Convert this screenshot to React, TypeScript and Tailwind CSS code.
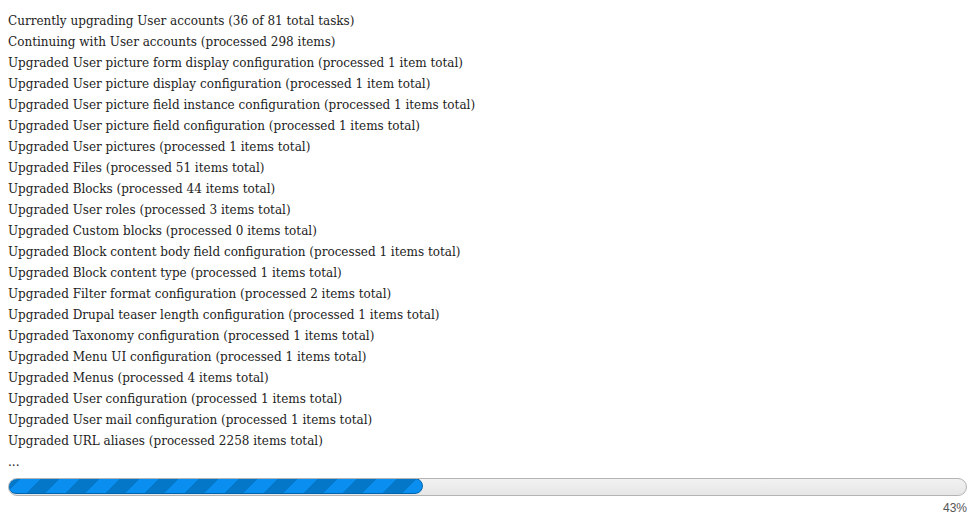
const lines = [
  'Currently upgrading User accounts (36 of 81 total tasks)',
  'Continuing with User accounts (processed 298 items)',
  'Upgraded User picture form display configuration (processed 1 item total)',
  'Upgraded User picture display configuration (processed 1 item total)',
  'Upgraded User picture field instance configuration (processed 1 items total)',
  'Upgraded User picture field configuration (processed 1 items total)',
  'Upgraded User pictures (processed 1 items total)',
  'Upgraded Files (processed 51 items total)',
  'Upgraded Blocks (processed 44 items total)',
  'Upgraded User roles (processed 3 items total)',
  'Upgraded Custom blocks (processed 0 items total)',
  'Upgraded Block content body field configuration (processed 1 items total)',
  'Upgraded Block content type (processed 1 items total)',
  'Upgraded Filter format configuration (processed 2 items total)',
  'Upgraded Drupal teaser length configuration (processed 1 items total)',
  'Upgraded Taxonomy configuration (processed 1 items total)',
  'Upgraded Menu UI configuration (processed 1 items total)',
  'Upgraded Menus (processed 4 items total)',
  'Upgraded User configuration (processed 1 items total)',
  'Upgraded User mail configuration (processed 1 items total)',
  'Upgraded URL aliases (processed 2258 items total)',
  '...',
];

export default function App() {
  const percent = 43;

  return (
    <div className="min-h-screen bg-white px-2 pt-[11px] text-[#222] font-['DejaVu_Serif',Georgia,serif] text-[12px] leading-[21px]">
      {/* upgrade log */}
      <div>
        {lines.map((line, i) => (
          <div key={i}>{line}</div>
        ))}
      </div>

      {/* progress bar */}
      <div className="mt-[5px] h-[18px] rounded-full border border-[#b4b4b4] bg-gradient-to-b from-[#f2f2f2] to-[#e6e6e6] overflow-hidden">
        <div
          className="h-full rounded-full border border-[#0065ad] -m-px bg-[repeating-linear-gradient(-45deg,#0a8ef0_0px,#0a8ef0_14px,#0577c9_14px,#0577c9_28px)]"
          style={{ width: `calc(${percent}% + 3px)` }}
        />
      </div>
      <div className="mt-[5px] text-right font-['Liberation_Sans',Arial,sans-serif] text-[12px] leading-[14px] text-[#555]">
        {percent}%
      </div>
    </div>
  );
}
